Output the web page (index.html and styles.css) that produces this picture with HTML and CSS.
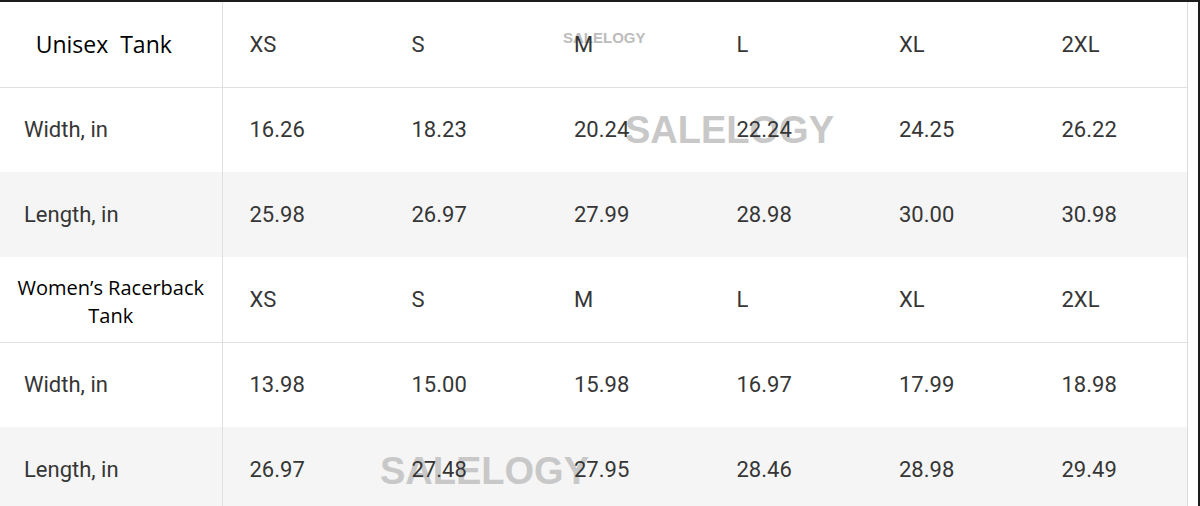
FILE: index.html
```html
<!DOCTYPE html>
<html lang="en">
<head>
    <meta charset="UTF-8">
    <meta name="viewport" content="width=device-width, initial-scale=1.0">
    <title>Tank Size Chart</title>
    <link rel="stylesheet" href="styles.css">
</head>
<body>
    <div class="frame">
        <div class="chart">
            <table class="sizes">
                <colgroup>
                    <col class="col-label">
                    <col class="col-size"><col class="col-size"><col class="col-size">
                    <col class="col-size"><col class="col-size"><col>
                </colgroup>
                <tr class="head">
                    <th class="product product-first">Unisex&nbsp; Tank</th>
                    <td>XS</td><td>S</td><td>M</td><td>L</td><td>XL</td><td>2XL</td>
                </tr>
                <tr>
                    <th class="measure">Width, in</th>
                    <td>16.26</td><td>18.23</td><td>20.24</td><td>22.24</td><td>24.25</td><td>26.22</td>
                </tr>
                <tr class="shade">
                    <th class="measure">Length, in</th>
                    <td>25.98</td><td>26.97</td><td>27.99</td><td>28.98</td><td>30.00</td><td>30.98</td>
                </tr>
                <tr class="head">
                    <th class="product product-small">Women’s Racerback<br>Tank</th>
                    <td>XS</td><td>S</td><td>M</td><td>L</td><td>XL</td><td>2XL</td>
                </tr>
                <tr>
                    <th class="measure">Width, in</th>
                    <td>13.98</td><td>15.00</td><td>15.98</td><td>16.97</td><td>17.99</td><td>18.98</td>
                </tr>
                <tr class="shade">
                    <th class="measure">Length, in</th>
                    <td>26.97</td><td>27.48</td><td>27.95</td><td>28.46</td><td>28.98</td><td>29.49</td>
                </tr>
            </table>
            <span class="mark mark-small">SALELOGY</span>
            <span class="mark mark-mid">SALELOGY</span>
            <span class="mark mark-low">SALELOGY</span>
        </div>
    </div>
</body>
</html>
```

FILE: styles.css
```css
body {
    margin: 0;
    padding: 0;
    background: #fff;
    font-family: Roboto, "Liberation Sans", sans-serif;
    overflow: hidden;
}
.frame {
    width: 1198px;
    height: 504px;
    border-top: 2px solid #1c1c1c;
    border-right: 2px solid #1c1c1c;
    overflow: hidden;
}
.chart {
    position: relative;
    width: 1187px;
    border-right: 1px solid #dcdcdc;
}
.sizes {
    width: 100%;
    border-collapse: collapse;
    table-layout: fixed;
}
.col-label {
    width: 222px;
}
.col-size {
    width: 162.5px;
}
.sizes tr {
    height: 85px;
}
.sizes .head {
    border-bottom: 1px solid #e0e0e0;
}
.sizes .shade {
    background: #f5f5f5;
}
.sizes th,
.sizes td {
    padding: 0;
    vertical-align: middle;
    text-align: left;
    font-weight: 400;
}
.sizes td {
    position: relative;
    z-index: 1;
    padding-left: 27px;
    font-size: 22px;
    color: #363636;
}
.sizes th {
    border-right: 1px solid #e0e0e0;
}
.measure {
    padding-left: 24px !important;
    font-size: 22px;
    color: #363636;
}
.product {
    font-family: "Open Sans", sans-serif;
    color: #000;
    text-align: center !important;
}
.product-first {
    font-size: 23px;
    padding-right: 14px !important;
}
.product-small {
    font-size: 20px;
    line-height: 28px;
    padding-top: 5px !important;
}
.mark {
    position: absolute;
    font-family: "Liberation Sans", sans-serif;
    font-weight: 700;
    color: #c8c8c8;
    white-space: nowrap;
}
.mark-small {
    left: 563px;
    top: 27px;
    font-size: 15px;
    color: #bcbcbc;
}
.mark-mid {
    left: 625px;
    top: 107px;
    font-size: 38px;
}
.mark-low {
    left: 380px;
    top: 448px;
    font-size: 38px;
}
```
